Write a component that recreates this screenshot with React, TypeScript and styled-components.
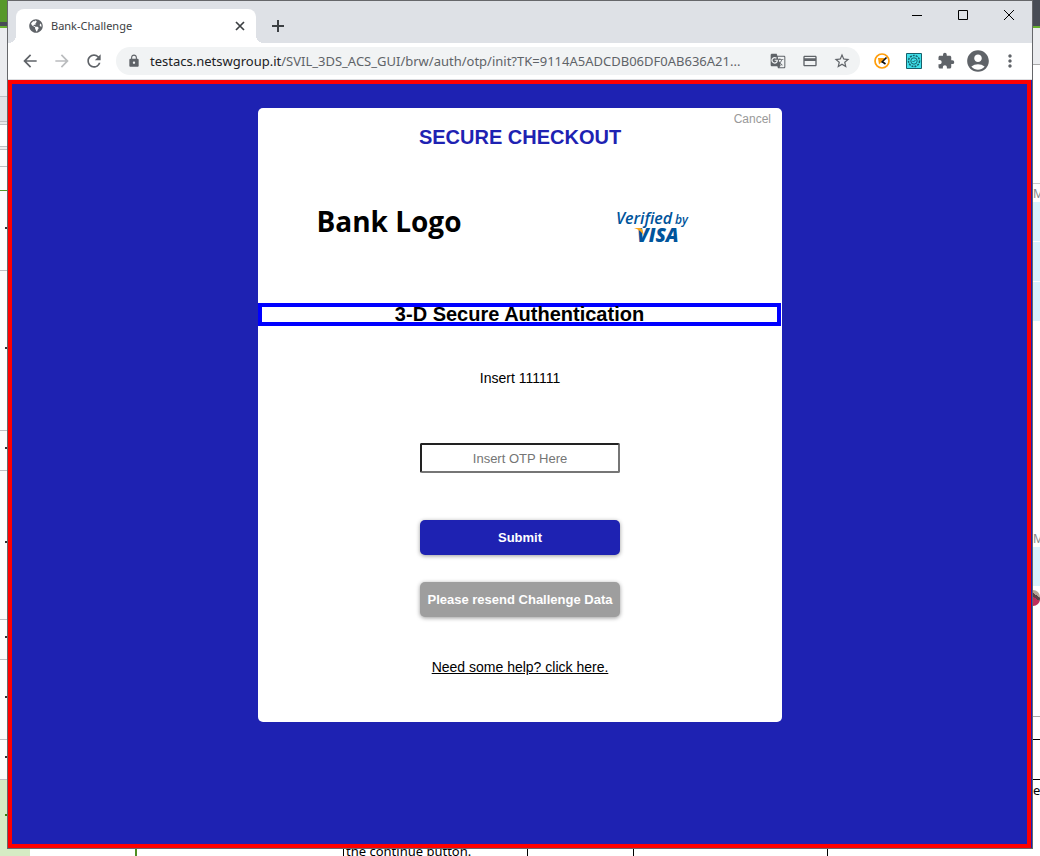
import React from "react";
import styled, { createGlobalStyle } from "styled-components";
import { FaGlobeAmericas } from "react-icons/fa";
import {
  MdAccountCircle,
  MdArrowBack,
  MdArrowForward,
  MdCreditCard,
  MdExtension,
  MdGTranslate,
  MdLock,
  MdMoreVert,
  MdRefresh,
  MdStarBorder,
} from "react-icons/md";

const brand = "#1e22b2";
const ui = '"Noto Sans", "Open Sans", sans-serif';

const GlobalStyle = createGlobalStyle`
  *, *::before, *::after { box-sizing: border-box; }
  body { margin: 0; background: #fff; font-family: "Liberation Sans", Arial, sans-serif; }
  button { border: 0; padding: 0; background: none; font: inherit; color: inherit; cursor: pointer; }
  svg { display: block; flex: none; }
`;

const Desktop = styled.div`
  display: grid;
  grid-template-columns: 7px minmax(0, 1fr) 7px;
  grid-template-rows: minmax(0, 1fr) 7px;
  min-height: 100vh;
`;

/* Document and chat windows showing behind the browser */
const Strip = styled.div`
  grid-row: 1 / 3;
  display: flex;
  flex-direction: column;
  overflow: hidden;
  height: 100%;
  min-height: 0;
`;

const Band = styled.div<{ $h: number; $bg?: string; $line?: string }>`
  flex: none;
  height: ${(p) => p.$h}px;
  background: ${(p) => p.$bg ?? "#fcfcfc"};
  border-bottom: ${(p) => (p.$line ? `1px solid ${p.$line}` : "0")};
  color: #555;
  font: 12px/17px ${ui};
  overflow: hidden;
  display: flex;
  justify-content: flex-end;
  align-items: center;
`;

const Tick = styled.span<{ $c?: string }>`
  width: 2px;
  height: 2px;
  margin-bottom: 6px;
  background: ${(p) => p.$c ?? "#333"};
`;

const Rest = styled.div<{ $bg: string }>`
  flex: 1;
  background: ${(p) => p.$bg};
`;

const Glyph = styled.span<{ $c: string; $size: number }>`
  width: 7px;
  color: ${(p) => p.$c};
  font-size: ${(p) => p.$size}px;
`;

const Avatar = styled.span`
  width: 7px;
  height: 16px;
  border-radius: 0 8px 8px 0;
  background: linear-gradient(35deg, #c0305c 45%, #5a4248 46% 62%, #b5a596 63%);
`;

const Footer = styled.div`
  grid-column: 2;
  grid-row: 2;
  display: grid;
  grid-template-columns: 23px 107px 207px 184px 106px 194px 1fr;
  height: 7px;
  overflow: hidden;
`;

const Cell = styled.div<{ $line?: string; $w?: number; $bg?: string }>`
  display: flex;
  align-items: flex-end;
  height: 7px;
  padding-left: 2px;
  background: ${(p) => p.$bg ?? "#fff"};
  border-right: ${(p) => (p.$line ? `${p.$w ?? 1}px solid ${p.$line}` : "0")};
  font: 13px/10px ${ui};
  color: #000;
  white-space: nowrap;
`;

const BrowserWindow = styled.div`
  grid-column: 2;
  grid-row: 1;
  display: flex;
  flex-direction: column;
  border: 1px solid #66676a;
  background: #fff;
`;

const TabStrip = styled.div`
  display: flex;
  align-items: flex-end;
  height: 42px;
  padding-left: 8px;
  background: #dee1e6;
`;

const Tab = styled.div`
  position: relative;
  display: flex;
  align-items: center;
  width: 240px;
  height: 34px;
  padding: 0 8px 0 13px;
  border-radius: 8px 8px 0 0;
  background: #fff;
  color: #3c4043;
  font: 11px/16px ${ui};

  &::before, &::after {
    content: "";
    position: absolute;
    bottom: 0;
    width: 8px;
    height: 8px;
  }
  &::before { left: -8px; background: radial-gradient(circle at 0 0, #dee1e6 8px, #fff 8px); }
  &::after { right: -8px; background: radial-gradient(circle at 100% 0, #dee1e6 8px, #fff 8px); }
`;

const TabTitle = styled.span`
  flex: 1;
  padding-left: 8px;
`;

const IconButton = styled.button<{ $w?: number; $h?: number; $c?: string }>`
  display: flex;
  flex: none;
  align-items: center;
  justify-content: center;
  width: ${(p) => p.$w ?? 32}px;
  height: ${(p) => p.$h ?? 28}px;
  color: ${(p) => p.$c ?? "#5f6368"};
`;

const NewTab = styled(IconButton)`
  margin-left: 6px;
`;

const WindowControls = styled.div`
  display: flex;
  align-self: flex-start;
  margin-left: auto;
`;

const Toolbar = styled.div`
  display: flex;
  align-items: center;
  height: 37px;
  padding: 0 6px;
  border-bottom: 1px solid #dcdde0;
`;

const AddressBar = styled.div`
  display: flex;
  flex: 1;
  align-items: center;
  min-width: 0;
  height: 28px;
  margin: 0 6px;
  padding: 0 2px 0 11px;
  border-radius: 14px;
  background: #f1f3f4;
  color: #5f6368;
`;

const Url = styled.span`
  flex: 1;
  min-width: 0;
  padding-left: 9px;
  overflow: hidden;
  font: 13px/20px ${ui};
  white-space: nowrap;

  b { color: #202124; font-weight: 400; }
`;

const Viewport = styled.main`
  display: flex;
  flex: 1;
  justify-content: center;
  align-items: flex-start;
  margin-right: 1px;
  padding: 24px 0 24px 1px;
  border: 4px solid #f00;
  background: ${brand};
  box-shadow: 1px 0 ${brand};
`;

const Card = styled.form`
  display: flex;
  flex-direction: column;
  align-items: center;
  width: 100%;
  max-width: 524px;
  padding-bottom: 45px;
  border-radius: 5px;
  background: #fff;
  color: #000;
  font-size: 14px;
  line-height: 20px;
`;

const Cancel = styled.button`
  align-self: flex-end;
  height: 16px;
  margin: 3px 11px 0 0;
  color: #999;
  font-size: 12px;
  line-height: 16px;
`;

const Title = styled.h1`
  margin: 0;
  color: ${brand};
  font-size: 20px;
  line-height: 20px;
`;

const Logos = styled.div`
  display: grid;
  grid-template-columns: 1fr 1fr;
  align-items: center;
  justify-items: center;
  width: 100%;
  height: 156px;
`;

const BankLogo = styled.div`
  padding-bottom: 8px;
  font: 700 28px/36px "Open Sans", sans-serif;
`;

const Heading = styled.h2`
  align-self: stretch;
  margin: 0 1px 42px 0;
  border: 4px solid #00f;
  font-size: 20px;
  line-height: 15px;
  text-align: center;
`;

const Otp = styled.input`
  width: 200px;
  height: 30px;
  margin: 55px 0 47px;
  border: 2px solid;
  border-color: #222 #767676 #767676 #222;
  border-radius: 2px;
  background: #fff;
  font: 13px/16px "Liberation Sans", Arial, sans-serif;
  text-align: center;

  &::placeholder { color: #757575; }
`;

const Action = styled.button<{ $bg: string }>`
  width: 200px;
  height: 35px;
  margin-bottom: 27px;
  border-radius: 5px;
  background: ${(p) => p.$bg};
  box-shadow: 0 1px 4px rgba(0, 0, 0, 0.4);
  color: #fff;
  font-size: 13px;
  font-weight: 700;
`;

const Help = styled.a`
  margin-top: 13px;
  color: #000;
`;

function VisaLogo() {
  return (
    <svg width="76" height="38" viewBox="0 0 76 38" role="img" aria-label="Verified by VISA">
      <g fill="#00549b" fontFamily="Open Sans, sans-serif" fontStyle="italic">
        <text x="3" y="18" fontSize="16" fontWeight="600">Verified</text>
        <text x="62" y="18" fontSize="12" fontWeight="600">by</text>
        <text x="24" y="36" fontSize="19" fontWeight="800">VISA</text>
      </g>
      <path d="M21 22h6q2 0 2.500 2l1.500 6q-3-6-10-8z" fill="#f9a51a" />
    </svg>
  );
}

function LeftStrip() {
  const g = "#c0c0c4";
  return (
    <Strip aria-hidden="true">
      <Band $h={22} $bg="#57982a" />
      <Band $h={4} $bg="#484c55" />
      <Band $h={2} $bg="#67b02f" />
      <Band $h={69} $bg="#ebecef" $line={g} />
      <Band $h={25} $bg="#e1e2e6" $line={g} />
      <Band $h={3} $bg="#e8e8ea" $line={g} />
      <Band $h={22} $bg="#fff" $line={g} />
      <Band $h={3} $bg="#eee" $line={g} />
      <Band $h={17} $line={g} />
      <Band $h={24} $line="#579a25" />
      <Band $h={80} $line={g}><Tick /></Band>
      <Band $h={160} $line={g}><Tick /></Band>
      <Band $h={40} $line={g}><Tick /></Band>
      <Band $h={149} $line={g}><Tick /></Band>
      <Band $h={40} $line={g}><Tick /></Band>
      <Band $h={80} $line={g}><Tick /></Band>
      <Band $h={40} $line={g}><Tick /></Band>
      <Band $h={76} $bg="#d6ecc4"><Tick $c="#3a7d0a" /></Band>
      <Rest $bg="#d6ecc4" />
    </Strip>
  );
}

function RightStrip() {
  const bubble = "#d9f2fd";
  return (
    <Strip aria-hidden="true">
      <Band $h={26} $bg="#484c55" />
      <Band $h={2} $bg="#67b02f" />
      <Band $h={37} $bg="#ebecef" $line="#aaa" />
      <Band $h={119} $bg="#fff" $line="#ccc" />
      <Band $h={18} $bg="#fff"><Glyph $c="#888" $size={12}>M</Glyph></Band>
      <Band $h={40} $bg={bubble} $line="#fff" />
      <Band $h={40} $bg={bubble} $line="#fff" />
      <Band $h={39} $bg={bubble} />
      <Band $h={208} $bg="#fff" />
      <Band $h={18} $bg="#fff"><Glyph $c="#888" $size={12}>M</Glyph></Band>
      <Band $h={39} $bg={bubble} />
      <Band $h={24} $bg="#fff"><Avatar /></Band>
      <Band $h={107} $bg="#fff" $line="#aaa" />
      <Band $h={23} $bg="#fff" $line="#000" />
      <Band $h={40} $bg="#fff" $line="#000" />
      <Band $h={20} $bg="#fff"><Glyph $c="#000" $size={13}>e</Glyph></Band>
      <Rest $bg="#fff" />
    </Strip>
  );
}

export default function App() {
  return (
    <>
      <GlobalStyle />
      <Desktop>
        <LeftStrip />
        <BrowserWindow>
          <TabStrip>
            <Tab>
              <FaGlobeAmericas size={14} color="#5f6368" />
              <TabTitle>Bank-Challenge</TabTitle>
              <IconButton $w={16} $h={16} $c="#3c4043" aria-label="Close tab">
                <svg width="10" height="10" viewBox="0 0 10 10" stroke="currentColor" strokeWidth="1.7">
                  <path d="M1 1l8 8M9 1L1 9" />
                </svg>
              </IconButton>
            </Tab>
            <NewTab $h={34} $c="#3c4043" aria-label="New tab">
              <svg width="12" height="12" viewBox="0 0 12 12" stroke="currentColor" strokeWidth="2">
                <path d="M6 0v12M0 6h12" />
              </svg>
            </NewTab>
            <WindowControls>
              <IconButton $w={46} $c="#000" aria-label="Minimize">
                <svg width="10" height="10" stroke="currentColor"><path d="M0 5.500h10" /></svg>
              </IconButton>
              <IconButton $w={46} $c="#000" aria-label="Maximize">
                <svg width="10" height="10" stroke="currentColor" fill="none"><path d="M.5.5h9v9h-9z" /></svg>
              </IconButton>
              <IconButton $w={46} $c="#000" aria-label="Close">
                <svg width="10" height="10" stroke="currentColor"><path d="M0 0l10 10M10 0L0 10" /></svg>
              </IconButton>
            </WindowControls>
          </TabStrip>
          <Toolbar>
            <IconButton aria-label="Back"><MdArrowBack size={20} /></IconButton>
            <IconButton $c="#babcbe" aria-label="Forward"><MdArrowForward size={20} /></IconButton>
            <IconButton aria-label="Reload"><MdRefresh size={20} /></IconButton>
            <AddressBar>
              <MdLock size={14} />
              <Url><b>testacs.netswgroup.it</b>/SVIL_3DS_ACS_GUI/brw/auth/otp/init?TK=9114A5ADCDB06DF0AB636A21...</Url>
              <IconButton aria-label="Translate"><MdGTranslate size={16} /></IconButton>
              <IconButton aria-label="Payment methods"><MdCreditCard size={16} /></IconButton>
              <IconButton aria-label="Bookmark"><MdStarBorder size={18} /></IconButton>
            </AddressBar>
            <IconButton aria-label="Tag extension">
              <svg width="16" height="16" viewBox="0 0 16 16" fill="none">
                <circle cx="8" cy="8" r="7" stroke="#ff9d0a" strokeWidth="1.700" />
                <path d="M4 5h7L8 8.500l-3 3z" fill="#ff9d0a" />
                <path d="M12.500 4.500L7.500 9.500M8 8.500l3.500 2.500" stroke="#111" strokeWidth="1.600" />
              </svg>
            </IconButton>
            <IconButton aria-label="Certificate extension">
              <svg width="16" height="16" viewBox="0 0 16 16" fill="none" stroke="#17606b">
                <path d="M.5.500h15v15H.500z" fill="#3fe0ea" />
                <circle cx="8" cy="8" r="5.500" strokeWidth="1.500" strokeDasharray="2 1" />
                <circle cx="8" cy="8" r="3.200" />
                <path d="M6.500 8l1 1 2-2" />
              </svg>
            </IconButton>
            <IconButton aria-label="Extensions"><MdExtension size={18} /></IconButton>
            <IconButton aria-label="Profile"><MdAccountCircle size={26} /></IconButton>
            <IconButton aria-label="Menu"><MdMoreVert size={20} /></IconButton>
          </Toolbar>
          <Viewport>
            <Card onSubmit={(e) => e.preventDefault()}>
              <Cancel type="button">Cancel</Cancel>
              <Title>SECURE CHECKOUT</Title>
              <Logos>
                <BankLogo>Bank Logo</BankLogo>
                <VisaLogo />
              </Logos>
              <Heading>3-D Secure Authentication</Heading>
              <label htmlFor="otp">Insert 111111</label>
              <Otp id="otp" placeholder="Insert OTP Here" />
              <Action type="submit" $bg={brand}>Submit</Action>
              <Action type="button" $bg="#9e9e9e">Please resend Challenge Data</Action>
              <Help href="#help">Need some help? click here.</Help>
            </Card>
          </Viewport>
        </BrowserWindow>
        <RightStrip />
        <Footer>
          <Cell $bg="#d6ecc4" />
          <Cell $line="#4f8f22" $w={2} />
          <Cell $line="#000" />
          <Cell $line="#000">the continue button.</Cell>
          <Cell $line="#000" />
          <Cell $line="#000" />
          <Cell />
        </Footer>
      </Desktop>
    </>
  );
}
